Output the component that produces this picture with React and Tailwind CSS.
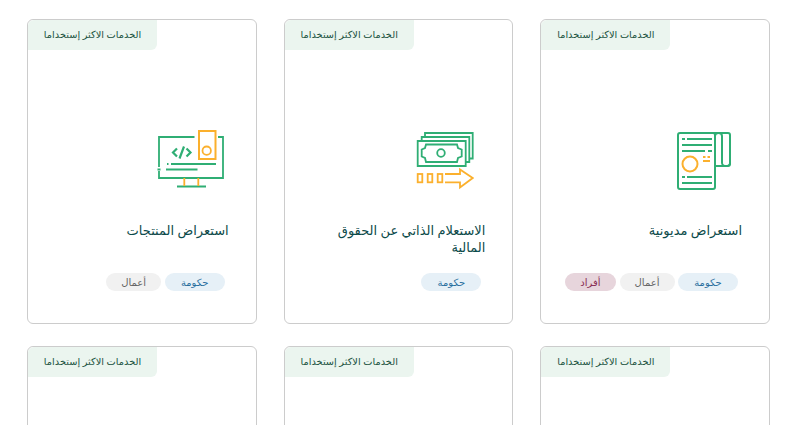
const font = { fontFamily: '"Noto Sans", "DejaVu Sans", sans-serif' };

const GREEN = "#2fae74";
const AMBER = "#fbb02d";

function DebtIcon() {
  return (
    <svg width="56" height="60" viewBox="0 0 56 60" fill="none" strokeWidth="2" stroke={GREEN}>
      <path d="M3 3 H36 a2 2 0 0 1 2 2 V57 a2 2 0 0 1-2 2 H3 a2 2 0 0 1-2-2 V5 a2 2 0 0 1 2-2 Z" />
      <path d="M36 3 H51 a2 2 0 0 1 2 2 V34 a2 2 0 0 1-2 2 H38" />
      <path d="M38 6 a3.5 3 0 0 1 7 0 V33 a4 3 0 0 0 8 0" />
      <path d="M5 9 H8 M10 9 H35 M5 15 H35 M5 21 H28 M31 21 H35 M5 47 H8 M10 47 H35 M5 53 H35" />
      <circle cx="13" cy="34" r="7.5" stroke={AMBER} />
      <path d="M26 27 H28.5 M30.5 27 H33 M26 31 H33" stroke={AMBER} />
    </svg>
  );
}

function MoneyIcon() {
  return (
    <svg width="58" height="60" viewBox="0 0 58 60" fill="none" strokeWidth="1.8" stroke={GREEN}>
      <path d="M9 7 V3 H56.7 V28.5 H53.5" />
      <path d="M5.7 11 V7 H53.3 V32 H49.7" />
      <path d="M1.7 11 H49.7 V36 H1.7 Z" />
      <path d="M10 14.5 H41 L42 18 L45.7 19.5 V26.5 L42 28 L41 32 H10 L9 28 L5.7 26.5 V19.5 L9 18 Z" />
      <circle cx="25" cy="23" r="3.8" />
      <g stroke={AMBER}>
        <rect x="1.7" y="44" width="4.6" height="8.3" />
        <rect x="11.7" y="44" width="4.6" height="8.3" />
        <rect x="21.7" y="44" width="4.6" height="8.3" />
        <path d="M29 44 H44 V39.5 L56.7 48 L44 57.5 V52.3 H29" />
      </g>
    </svg>
  );
}

function ProductIcon() {
  return (
    <svg width="68" height="60" viewBox="0 0 68 60" fill="none" strokeWidth="1.8" stroke={GREEN}>
      <path d="M37.5 7 H2 V37 M2 41 V48 H66 V7 H61" />
      <path d="M0.5 39.5 H3.5 M10 34 H11.5 M14 34 H59 M9 39.5 H40.5 M20 56.5 H49" />
      <path d="M20 18.5 L16 22.5 L20 26.5 M29.5 18.5 L33.5 22.5 L29.5 26.5 M27 16.5 L22.5 28.5" strokeWidth="2.2" />
      <path d="M27.3 48 V56 M41.3 48 V56" stroke={AMBER} />
      <rect x="42" y="1" width="16.5" height="28" stroke={AMBER} strokeWidth="2" />
      <circle cx="49.7" cy="20.7" r="4.2" stroke={AMBER} />
    </svg>
  );
}

const TAGS = {
  gov: { label: "حكومة", cls: "w-[60px] bg-[#e6f0f7] text-[#2a6f9e]" },
  biz: { label: "أعمال", cls: "w-[55px] bg-[#f1f1f1] text-[#666666]" },
  ind: { label: "أفراد", cls: "w-[51px] bg-[#e7d5dc] text-[#8a2f55]" },
};

const cards = [
  { title: "استعراض مديونية", icon: <DebtIcon />, pad: "pr-[36px]", tags: ["gov", "biz", "ind"] },
  { title: "الاستعلام الذاتي عن الحقوق المالية", icon: <MoneyIcon />, pad: "pr-[38px]", tags: ["gov"] },
  { title: "استعراض المنتجات", icon: <ProductIcon />, pad: "pr-[31px]", tags: ["gov", "biz"] },
];

function MostUsed() {
  return (
    <div className="flex justify-end">
      <div className="flex h-[30px] w-[129px] items-center justify-center rounded-tl-md rounded-br-md bg-[#ebf5ef] text-[9.8px] text-[#1a5240]">
        الخدمات الاكثر إستخداما
      </div>
    </div>
  );
}

export default function App() {
  return (
    <div dir="rtl" style={font} className="h-[425px] overflow-hidden bg-white pt-[19px] pr-[21px] pl-[27px]">
      <div className="grid grid-cols-3 gap-x-[27px] gap-y-[22px]">
        {cards.map((c) => (
          <div key={c.title} className="h-[305px] rounded-md border border-[#cccccc]">
            <MostUsed />
            <div className={`mt-[80px] flex h-[60px] items-center ${c.pad}`}>{c.icon}</div>
            <h3 className="mt-[32px] h-[42px] pr-[27px] pl-[20px] text-[13px] leading-[17px] font-medium text-[#0c4a4a]">{c.title}</h3>
            <div className="mt-[9px] flex gap-[3.5px] pr-[31px]">
              {c.tags.map((t) => (
                <span key={t} className={`flex h-[18px] items-center justify-center rounded-full text-[10px] ${TAGS[t].cls}`}>
                  {TAGS[t].label}
                </span>
              ))}
            </div>
          </div>
        ))}
        {cards.map((c) => (
          <div key={c.title + "2"} className="h-[305px] rounded-md border border-[#cccccc]">
            <MostUsed />
          </div>
        ))}
      </div>
    </div>
  );
}
